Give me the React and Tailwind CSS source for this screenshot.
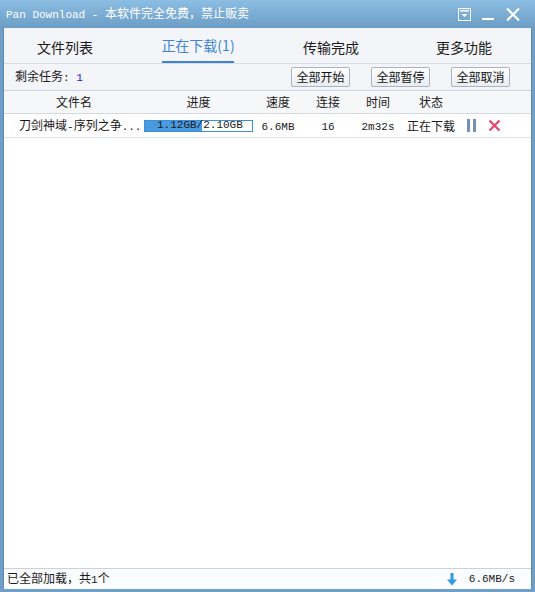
const cjk = "font-['Noto_Sans_CJK_SC',sans-serif]";

// ascii bits in the reference use a narrow bitmap mono face
function M({ children, className = '' }) {
  return <span className={`font-['Liberation_Mono','DejaVu_Sans_Mono',monospace] text-[11px] ${className}`}>{children}</span>;
}

function Btn({ children }) {
  return (
    <button className="h-[20px] w-[59px] rounded-[2px] border border-[#a9b4c0] bg-gradient-to-b from-white to-[#e9edf1] text-[12px] leading-none text-[#111]">
      {children}
    </button>
  );
}

const cols = 'grid grid-cols-[140px_109px_50px_50px_50px_56px_1fr]';

export default function App() {
  return (
    <div className={`w-[535px] h-[592px] flex flex-col bg-[#6f9fc6] ${cjk} text-[#1a1a1a]`}>
      {/* title bar */}
      <div className="h-[28px] shrink-0 flex items-center pl-[6px] pr-[14px] bg-gradient-to-b from-[#8cbde2] to-[#6c9dc6] text-white">
        <span className="text-[12px] leading-none">
          <M className="text-[10px]">Pan Download - </M>本软件完全免费，禁止贩卖
        </span>
        <div className="ml-auto flex items-center gap-[10px]">
          <svg width="13" height="13" viewBox="0 0 13 13">
            <rect x="0.5" y="0.5" width="12" height="12" fill="none" stroke="white" />
            <rect x="2" y="2" width="9" height="1.5" fill="white" />
            <path d="M3.5 6 H9.5 L6.5 9 Z" fill="white" />
          </svg>
          <svg width="14" height="13" viewBox="0 0 14 13">
            <rect x="1" y="10" width="12" height="2" fill="white" />
          </svg>
          <svg width="16" height="15" viewBox="0 0 16 15">
            <path d="M2 1.5 L14 13.5 M14 1.5 L2 13.5" stroke="white" strokeWidth="2.2" />
          </svg>
        </div>
      </div>

      {/* client area */}
      <div className="flex-1 mx-[3px] flex flex-col border-x border-[#5d8ab0] bg-white">
        <div className="h-[36px] shrink-0 grid grid-cols-[120px_120px_120px_120px] gap-x-[13px] pl-[1px] bg-[#f3f5f8] border-b border-[#d7dde4] text-[14px]">
          <div className="flex items-center justify-center pt-[4px]">文件列表</div>
          <div className="flex flex-col items-center justify-end">
            <span className="text-[#3d84d8] leading-none mb-[9px]">正在下载(1)</span>
            <div className="h-[2px] w-[72px] bg-[#3d84d8]" />
          </div>
          <div className="flex items-center justify-center pt-[4px]">传输完成</div>
          <div className="flex items-center justify-center pt-[4px]">更多功能</div>
        </div>

        <div className="h-[27px] shrink-0 flex items-center bg-[#f3f5f8] border-b border-[#c9d1da] pl-[11px] pr-[21px]">
          <span className="text-[12px]">
            剩余任务<M>: </M><M className="text-[#1a1ae0]">1</M>
          </span>
          <div className="ml-auto flex gap-[21px]">
            <Btn>全部开始</Btn>
            <Btn>全部暂停</Btn>
            <Btn>全部取消</Btn>
          </div>
        </div>

        <div className={`h-[23px] shrink-0 ${cols} items-center bg-[#f6f7f9] border-b border-[#d3d9e0] text-[12px] text-center`}>
          <div>文件名</div>
          <div>进度</div>
          <div>速度</div>
          <div>连接</div>
          <div>时间</div>
          <div>状态</div>
          <div />
        </div>

        <div className={`h-[24px] shrink-0 ${cols} items-center border-b border-[#dde2e8] text-[12px] text-center`}>
          <div className="text-left pl-[15px] whitespace-nowrap">刀剑神域<M>-</M>序列之争<M>...</M></div>
          <div className="relative h-[12px] border border-[#3c8fdc] bg-white">
            <div className="absolute inset-y-0 left-0 w-[53%] bg-[#4a9ae0]" />
            <div className="relative h-full flex items-center pl-[12px] leading-none"><M>1.12GB/2.10GB</M></div>
          </div>
          <div><M>6.6MB</M></div>
          <div><M>16</M></div>
          <div><M>2m32s</M></div>
          <div>正在下载</div>
          <div className="flex items-center gap-[11px] pl-[8px]">
            <svg width="10" height="13" viewBox="0 0 10 13">
              <rect x="0" y="0" width="3" height="13" fill="#7391b4" />
              <rect x="6" y="0" width="3" height="13" fill="#7391b4" />
            </svg>
            <svg width="13" height="13" viewBox="0 0 13 13">
              <path d="M1.5 1.5 L11.5 11.5 M11.5 1.5 L1.5 11.5" stroke="#e8456a" strokeWidth="2.2" />
            </svg>
          </div>
        </div>

        <div className="flex-1 bg-white" />

        <div className="h-[21px] shrink-0 flex items-center border-t border-[#c9d1da] bg-[#fbfcfd] pl-[3px] pr-[16px] text-[12px]">
          <span>已全部加载，共<M>1</M>个</span>
          <svg className="ml-auto mr-[12px]" width="10" height="13" viewBox="0 0 10 13">
            <rect x="3.5" y="0" width="3" height="8" fill="#2f9be8" />
            <path d="M0 6.5 H10 L5 12.5 Z" fill="#2f9be8" />
          </svg>
          <M>6.6MB/s</M>
        </div>
      </div>
      <div className="h-[3px] shrink-0" />
    </div>
  );
}
